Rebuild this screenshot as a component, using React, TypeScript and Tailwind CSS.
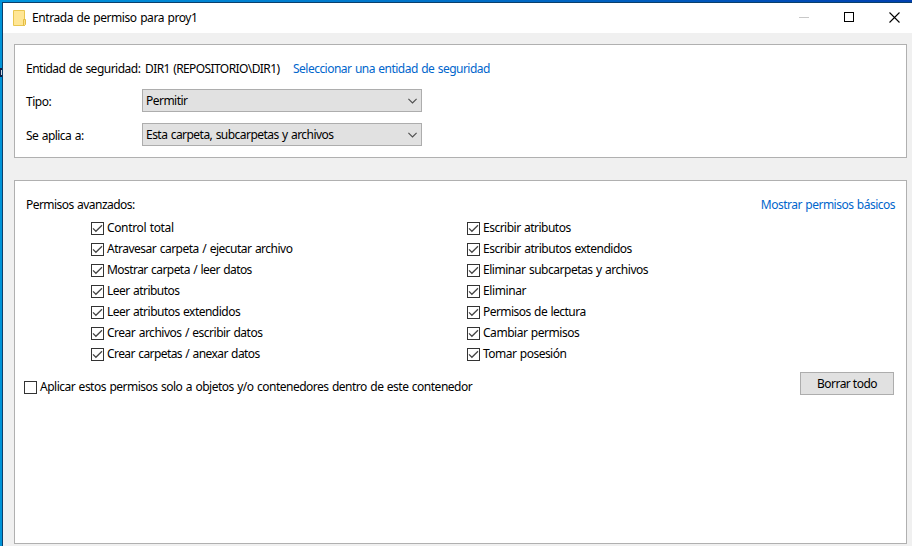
import React from "react";

type Perm = { label: string; tracking: string };

const left: Perm[] = [
  { label: "Control total", tracking: "tracking-[-0.36px]" },
  { label: "Atravesar carpeta / ejecutar archivo", tracking: "tracking-[-0.5px]" },
  { label: "Mostrar carpeta / leer datos", tracking: "tracking-[-0.56px]" },
  { label: "Leer atributos", tracking: "tracking-[-0.54px]" },
  { label: "Leer atributos extendidos", tracking: "tracking-[-0.52px]" },
  { label: "Crear archivos / escribir datos", tracking: "tracking-[-0.5px]" },
  { label: "Crear carpetas / anexar datos", tracking: "tracking-[-0.58px]" },
];

const right: Perm[] = [
  { label: "Escribir atributos", tracking: "tracking-[-0.51px]" },
  { label: "Escribir atributos extendidos", tracking: "tracking-[-0.49px]" },
  { label: "Eliminar subcarpetas y archivos", tracking: "tracking-[-0.48px]" },
  { label: "Eliminar", tracking: "tracking-[-0.39px]" },
  { label: "Permisos de lectura", tracking: "tracking-[-0.54px]" },
  { label: "Cambiar permisos", tracking: "tracking-[-0.47px]" },
  { label: "Tomar posesión", tracking: "tracking-[-0.52px]" },
];

function Box({ checked }: { checked: boolean }) {
  return (
    <span className="mt-px block h-[13px] w-[13px] shrink-0 border border-[#333333] bg-white">
      {checked && (
        <svg width="11" height="11" viewBox="0 0 11 11" className="block" fill="none">
          <path d="M1 5.4 L3.9 8.3 L10 2.2" stroke="#444" strokeWidth="1.25" />
        </svg>
      )}
    </span>
  );
}

function Check({ label, tracking, checked = true }: Perm & { checked?: boolean }) {
  return (
    <label className="flex h-[21px] items-start gap-[3px]">
      <Box checked={checked} />
      <span className={"leading-[14px] " + tracking}>{label}</span>
    </label>
  );
}

function Select({ value, tracking }: { value: string; tracking: string }) {
  return (
    <div className="flex h-[23px] w-[280px] items-center justify-between border border-[#adadad] bg-[#e1e1e1] pl-[3px] pr-1">
      <span className={tracking}>{value}</span>
      <svg width="9" height="6" viewBox="0 0 9 6" fill="none" className="block">
        <path d="M0.4 0.8 L4.5 4.9 L8.6 0.8" stroke="#505050" strokeWidth="1.15" />
      </svg>
    </div>
  );
}

export default function App() {
  return (
    <div className="flex h-[546px] w-[912px] flex-col overflow-hidden bg-[#f0f0f0] font-['Noto_Sans','Open_Sans',sans-serif] text-[12px] leading-[16px] whitespace-nowrap text-black [word-spacing:0.8px]">
      <div className="h-[2px] shrink-0 bg-linear-to-r from-[#0094dc] via-[#0078cc] via-40% to-[#0040b0]" />
      <div className="flex min-h-0 flex-1">
        <div className="w-[2px] shrink-0 bg-[#0094d8]">
          <div className="mt-[66px] h-[9px] w-[2px] bg-[#0b1c45] pt-[2px] pl-px">
            <div className="h-[5px] w-px bg-[#c9d6e0]" />
          </div>
        </div>
        <div className="flex min-w-0 flex-1 flex-col border-t border-l border-[#0b3f6b]">
          <header className="flex h-[30px] shrink-0 items-center bg-white pl-[10px]">
            <svg width="13" height="16" viewBox="0 0 13 16" className="block shrink-0">
              <path d="M0.5 0.5 H11.5 V15.5 H0.5 Z" fill="#ffe695" stroke="#e9c64f" />
              <path d="M10.5 9.5 H12.5 V14.5 L11.5 15.5 H10.5 Z" fill="#ffe187" stroke="#e3bd44" />
            </svg>
            <span className="ml-[6px] tracking-[-0.43px]">Entrada de permiso para proy1</span>
            <div className="mr-[12px] ml-auto flex items-center gap-[35px]">
              <span className="mt-[-2px] block h-px w-[10px] bg-[#c8c8c8]" />
              <span className="mt-[-2px] block h-[10px] w-[10px] border border-black" />
              <svg width="11" height="11" viewBox="0 0 11 11" className="mt-[-2px] block">
                <path d="M0.5 0.5 L10.5 10.5 M10.5 0.5 L0.5 10.5" stroke="#000" strokeWidth="1.1" />
              </svg>
            </div>
          </header>

          <main className="flex flex-col gap-[22px] pt-[11px] pl-[11px]">
            <section className="h-[114px] w-[893px] border border-[#b0b0b0] bg-white pt-[16px] pl-[11px]">
              <div className="flex">
                <span className="w-[119px] tracking-[-0.51px]">Entidad de seguridad:</span>
                <span className="w-[148px] tracking-[-0.59px]">DIR1 (REPOSITORIO\DIR1)</span>
                <a className="tracking-[-0.52px] text-[#0066cc]">Seleccionar una entidad de seguridad</a>
              </div>
              <div className="mt-[12px] flex">
                <span className="w-[116px] pt-[5px] tracking-[-0.45px]">Tipo:</span>
                <Select value="Permitir" tracking="tracking-[-0.52px]" />
              </div>
              <div className="mt-[11px] flex">
                <span className="w-[116px] pt-[5px] tracking-[-0.53px]">Se aplica a:</span>
                <Select value="Esta carpeta, subcarpetas y archivos" tracking="tracking-[-0.54px]" />
              </div>
            </section>

            <section className="h-[364px] w-[893px] border border-[#b0b0b0] bg-white pt-[16px] pr-[11px] pl-[11px]">
              <div className="flex justify-between">
                <span className="tracking-[-0.54px]">Permisos avanzados:</span>
                <a className="tracking-[-0.51px] text-[#0066cc]">Mostrar permisos básicos</a>
              </div>
              <div className="mt-[8px] flex pl-[65px]">
                <div className="w-[376px]">
                  {left.map((p) => (
                    <Check key={p.label} {...p} />
                  ))}
                </div>
                <div>
                  {right.map((p) => (
                    <Check key={p.label} {...p} />
                  ))}
                </div>
              </div>
              <div className="mt-[4px] -ml-[2px] flex items-start justify-between">
                <div className="pt-[8px]">
                  <Check
                    checked={false}
                    label="Aplicar estos permisos solo a objetos y/o contenedores dentro de este contenedor"
                    tracking="tracking-[-0.5px]"
                  />
                </div>
                <button className="mr-px h-[23px] w-[94px] border border-[#adadad] bg-[#e1e1e1] tracking-[-0.53px]">
                  Borrar todo
                </button>
              </div>
            </section>
          </main>
        </div>
      </div>
    </div>
  );
}
